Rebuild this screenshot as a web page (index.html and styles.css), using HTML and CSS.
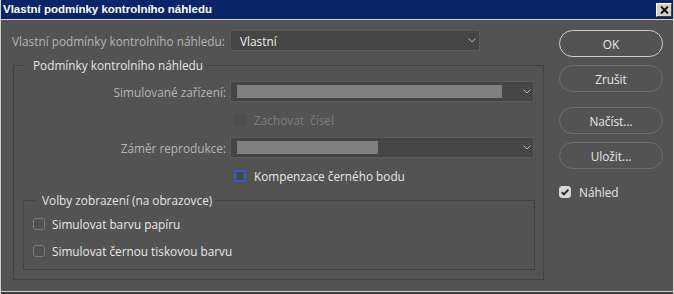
FILE: index.html
```html
<!DOCTYPE html>
<html lang="cs">
<head>
<meta charset="utf-8">
<title>Vlastní podmínky kontrolního náhledu</title>
<link rel="stylesheet" href="styles.css">
</head>
<body>
<div class="window">
  <div class="titlebar">
    <span class="title">Vlastní podmínky kontrolního náhledu</span>
    <span class="close"><svg width="9" height="8" viewBox="0 0 9 8"><path d="M1 0.5 L8 7.5 M8 0.5 L1 7.5" stroke="#000" stroke-width="1.8" fill="none"/></svg></span>
  </div>
  <div class="main">
    <div class="left">
      <div class="row1">
        <span class="lbl lbl1">Vlastní podmínky kontrolního náhledu:</span>
        <div class="select sel1">
          <span class="val">Vlastní</span>
          <svg class="chev" width="8" height="5" viewBox="0 0 8 5"><path d="M0.5 0.5 L4 4 L7.5 0.5" stroke="#b8b8b8" stroke-width="1" fill="none"/></svg>
        </div>
      </div>
      <fieldset class="group outer">
        <legend class="legend1">Podmínky kontrolního náhledu</legend>
        <div class="grid">
          <span class="lbl glbl">Simulované zařízení:</span>
          <div class="select sel2">
            <span class="bar" style="width:265px"></span>
            <svg class="chev" width="8" height="5" viewBox="0 0 8 5"><path d="M0.5 0.5 L4 4 L7.5 0.5" stroke="#b8b8b8" stroke-width="1" fill="none"/></svg>
          </div>
          <span></span>
          <div class="check disabled"><span class="box"></span><span class="ctext">Zachovat&nbsp; čísel</span></div>
          <span class="lbl glbl">Záměr reprodukce:</span>
          <div class="select sel2">
            <span class="bar" style="width:141px"></span>
            <svg class="chev" width="8" height="5" viewBox="0 0 8 5"><path d="M0.5 0.5 L4 4 L7.5 0.5" stroke="#b8b8b8" stroke-width="1" fill="none"/></svg>
          </div>
          <span></span>
          <div class="check"><span class="box focus"></span><span class="ctext">Kompenzace černého bodu</span></div>
        </div>
        <fieldset class="group inner">
          <legend class="legend2">Volby zobrazení (na obrazovce)</legend>
          <div class="opts">
            <div class="check opt"><span class="box"></span><span class="ctext">Simulovat barvu papíru</span></div>
            <div class="check opt"><span class="box"></span><span class="ctext">Simulovat černou tiskovou barvu</span></div>
          </div>
        </fieldset>
      </fieldset>
    </div>
    <div class="right">
      <div class="btn ok">OK</div>
      <div class="btn b2">Zrušit</div>
      <div class="btn b3">Načíst...</div>
      <div class="btn b2">Uložit...</div>
      <div class="check preview"><span class="box checked"><svg width="12" height="12" viewBox="0 0 12 12"><path d="M2.8 6.2 L5 8.4 L9.4 3.6" stroke="#2a2a2a" stroke-width="2" fill="none"/></svg></span><span class="ctext">Náhled</span></div>
    </div>
  </div>
</div>
</body>
</html>
```
FILE: styles.css
```css
* { box-sizing: border-box; }
html, body { margin: 0; padding: 0; background: #535353; }
body {
  width: 674px;
  height: 294px;
  overflow: hidden;
  font-family: "Open Sans", Lato, "Liberation Sans", sans-serif;
  font-size: 11.8px;
}
.window {
  width: 674px;
  height: 294px;
  display: flex;
  flex-direction: column;
  border-left: 1px solid #d4d0c8;
  border-right: 1px solid #d4d0c8;
  background: #3c3c3c;
}
.titlebar {
  height: 20px;
  flex: none;
  background: #0a246a;
  border-bottom: 1px solid #d4d0c8;
  display: flex;
  align-items: center;
  justify-content: space-between;
  padding: 0 1px 0 2px;
}
.title {
  color: #fff;
  font-family: "Liberation Sans", Arial, sans-serif;
  font-weight: bold;
  font-size: 11.5px;
  line-height: 19px;
}
.close {
  width: 16px;
  height: 14px;
  background: #d4d0c8;
  border: 1px solid;
  border-color: #ffffff #404040 #404040 #ffffff;
  display: flex;
  align-items: center;
  justify-content: center;
}
.main {
  height: 272px;
  flex: none;
  background: #535353;
  border-bottom: 1px solid #d4d0c8;
  display: flex;
  gap: 15px;
  padding: 10px 0 0 11px;
}
.left { width: 532px; flex: none; }
.right { width: 104px; flex: none; display: flex; flex-direction: column; }

.row1 { display: flex; align-items: center; height: 21px; }
.lbl { color: #b6b6b6; white-space: nowrap; }
.lbl1 { width: 218px; }
.select {
  height: 21px;
  background: #454545;
  border: 1px solid #5a5a5a;
  display: flex;
  align-items: center;
  justify-content: space-between;
}
.sel1 { width: 250px; padding: 0 3px 0 9px; }
.sel2 { width: 304px; padding: 0 2px 0 6px; }
.val { color: #f0f0f0; }
.bar { height: 13px; background: #808080; display: block; }
.chev { display: block; }

.group {
  margin: 0;
  min-width: 0;
  border: 1px solid #414141;
}
.outer { margin: 6px 0 0 1px; padding: 0 8px 9px 9px; }
.inner { margin-top: 6px; padding: 5px 8px 8px 9px; }
legend {
  color: #e4e4e4;
  line-height: 16px;
  white-space: nowrap;
}
.legend1 { padding: 0 3px 0 10px; margin-left: 0; }
.legend2 { padding: 0 3px 0 7px; margin-left: 2px; }

.grid {
  display: grid;
  grid-template-columns: 203px 304px;
  grid-auto-rows: 21px;
  column-gap: 4px;
  row-gap: 7px;
  align-items: center;
  padding-top: 8px;
}
.glbl { text-align: right; }

.check { display: flex; align-items: center; gap: 8px; height: 21px; padding-left: 4px; }
.ctext { color: #e8e8e8; white-space: nowrap; }
.box {
  width: 12px;
  height: 12px;
  border: 1px solid #7a7a7a;
  border-radius: 3px;
  background: #505050;
  flex: none;
  display: block;
}
.disabled .box { border-color: #4a4a4a; background: #4e4e4e; }
.disabled .ctext { color: #7c7c7c; }
.box.focus { border: 2px solid #2166d1; background: #474747; }

.opts { display: flex; flex-direction: column; gap: 6px; }
.opt { padding-left: 0; gap: 7px; }

.btn {
  height: 27px;
  border: 1px solid #6e6e6e;
  border-radius: 14px;
  display: flex;
  align-items: center;
  justify-content: center;
  color: #e8e8e8;
}
.ok { border-color: #cfcfcf; }
.b2 { margin-top: 8px; }
.b3 { margin-top: 15px; }
.preview { margin-top: 15px; height: 16px; padding-left: 0; }
.box.checked { background: #d6d6d6; border-color: #d6d6d6; position: relative; }
.box.checked svg { display: block; margin: -1px; }
```
